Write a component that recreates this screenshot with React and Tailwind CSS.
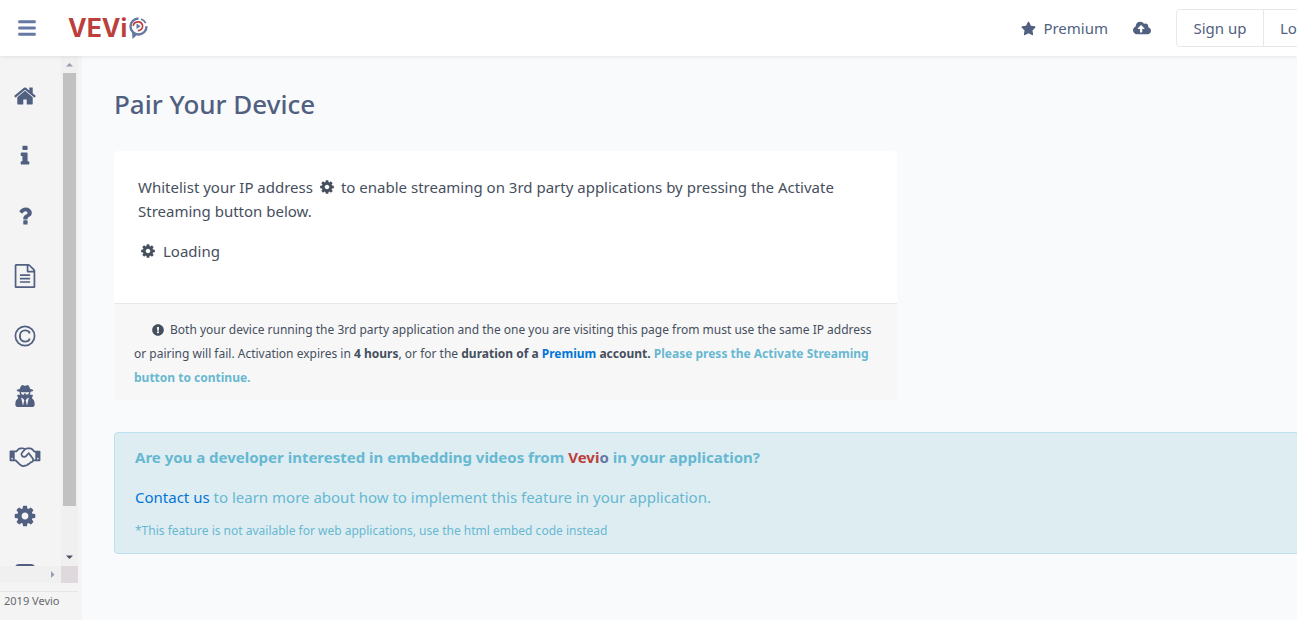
import {
  FaBars,
  FaCloudUploadAlt,
  FaExclamationCircle,
  FaStar,
  FaUserSecret,
} from 'react-icons/fa'

const PATHS = {
  home: 'M1472 992v480q0 26-19 45t-45 19h-384v-384h-256v384h-384q-26 0-45-19t-19-45v-480q0-1 .5-3t.5-3l575-474 575 474q1 2 1 6zm223-69l-62 74q-8 9-21 11h-3q-13 0-21-7l-692-577-692 577q-12 8-24 7-13-2-21-11l-62-74q-8-10-7-23.5t11-21.5l719-599q32-26 76-26t76 26l244 204v-195q0-14 9-23t23-9h192q14 0 23 9t9 23v408l219 182q10 8 11 21.5t-7 23.5z',
  info: 'M1216 1344v128q0 26-19 45t-45 19h-512q-26 0-45-19t-19-45v-128q0-26 19-45t45-19h64v-384h-64q-26 0-45-19t-19-45v-128q0-26 19-45t45-19h384q26 0 45 19t19 45v576h64q26 0 45 19t19 45zm-128-1152v192q0 26-19 45t-45 19h-256q-26 0-45-19t-19-45v-192q0-26 19-45t45-19h256q26 0 45 19t19 45z',
  question: 'M1088 1256v240q0 16-12 28t-28 12h-240q-16 0-28-12t-12-28v-240q0-16 12-28t28-12h240q16 0 28 12t12 28zm316-600q0 54-15.5 101t-35 76.5-55 59.5-57.5 43.5-61 35.5q-41 23-68.5 65t-27.5 67q0 17-12 32.5t-28 15.5h-240q-15 0-25.5-18.5t-10.5-37.5v-45q0-83 65-156.5t143-108.5q59-27 84-56t25-76q0-42-46.5-74t-107.5-32q-65 0-108 29-35 25-107 115-13 16-31 16-12 0-25-8l-164-125q-13-10-15.5-25t5.5-28q160-266 464-266 80 0 161 31t146 83 106 127.5 41 158.5z',
  file: 'M1596 380q28 28 48 76t20 88v1152q0 40-28 68t-68 28h-1344q-40 0-68-28t-28-68v-1600q0-40 28-68t68-28h896q40 0 88 20t76 48zm-444-244v376h376q-10-29-22-41l-313-313q-12-12-41-22zm384 1528v-1024h-416q-40 0-68-28t-28-68v-416h-768v1536h1280zm-1024-864q0-14 9-23t23-9h704q14 0 23 9t9 23v64q0 14-9 23t-23 9h-704q-14 0-23-9t-9-23v-64zm736 224q14 0 23 9t9 23v64q0 14-9 23t-23 9h-704q-14 0-23-9t-9-23v-64q0-14 9-23t23-9h704zm0 256q14 0 23 9t9 23v64q0 14-9 23t-23 9h-704q-14 0-23-9t-9-23v-64q0-14 9-23t23-9h704z',
  cog: 'M1152 896q0-106-75-181t-181-75-181 75-75 181 75 181 181 75 181-75 75-181zm512-109v222q0 12-8 23t-20 13l-185 28q-19 54-39 91 35 50 107 138 10 12 10 25t-9 23q-27 37-99 108t-94 71q-12 0-26-9l-138-108q-44 23-91 38-16 136-29 186-7 28-36 28h-222q-14 0-24.5-8.5t-11.5-21.5l-28-184q-49-16-90-37l-141 107q-10 9-25 9-14 0-25-11-126-114-165-168-7-10-7-23 0-12 8-23 15-21 51-66.5t54-70.5q-27-50-41-99l-183-27q-13-2-21-12.5t-8-23.5v-222q0-12 8-23t19-13l186-28q14-46 39-92-40-57-107-138-10-12-10-24 0-10 9-23 26-36 98.5-107.5t94.5-71.5q13 0 26 10l138 107q44-23 91-38 16-136 29-186 7-28 36-28h222q14 0 24.5 8.5t11.5 21.5l28 184q49 16 90 37l142-107q9-9 24-9 13 0 25 10 129 119 165 170 7 8 7 22 0 12-8 23-15 21-51 66.5t-54 70.5q26 50 41 98l183 28q13 2 21 12.5t8 23.5z',
  handshake: 'M192 1152q40 0 56-32t0-64-56-32-56 32 0 64 56 32zm1473-58q-10-13-38.5-50t-41.5-54-38-49-42.5-53-40.5-47-45-49l-125 140q-83 94-208.5 92t-205.5-98q-57-69-56.5-158t58.5-157l177-206q-22-11-51-16.5t-47.5-6-56.5.5-49 1q-92 0-158 66l-158 158h-155v544q5 0 21-.5t22 0 19.5 2 20.5 4.5 17.5 8.5 18.5 13.5l297 292q115 111 227 111 78 0 125-47 57 20 112.5-8t72.5-85q74 6 127-44 20-18 36-45.5t14-50.5q10 10 43 10 43 0 77-21t49.5-53 12-71.5-30.5-73.5zm159 58h96v-512h-93l-157-180q-66-76-169-76h-167q-89 0-146 67l-209 243q-28 33-28 75t27 75q43 51 110 52t111-49l193-218q25-23 53.5-21.5t47 27 8.5 56.5q16 19 56 63t60 68q29 36 82.5 105.500t64.5 84.500q52 66 60 140zm288 0q40 0 56-32t0-64-56-32-56 32 0 64 56 32zm192-576v640q0 26-19 45t-45 19h-434q-27 65-82 106.500t-125 51.500q-33 48-80.500 81.500t-102.500 45.500q-42 53-104.500 81.500t-128.500 24.500q-60 34-126 39.500t-127.500-14-117-53.500-103.500-81l-287-282h-358q-26 0-45-19t-19-45v-672q0-26 19-45t45-19h421q14-14 47-48t47.500-48 44-40 50.500-37.500 51-25.500 62-19.500 68-5.500h117q99 0 181 56 82-56 181-56h167q35 0 67 6t56.500 14.500 51.500 26.500 44.500 31 43 39.500 39 41 41 45.500 41.500 44h355q26 0 45 19t19 45z',
}

function Glyph({ name, viewBox = '0 0 1792 1792', className }) {
  return (
    <svg viewBox={viewBox} fill="currentColor" className={className} aria-hidden="true">
      <path d={PATHS[name]} />
    </svg>
  )
}

function Copyright() {
  return (
    <svg viewBox="0 0 24 24" fill="none" stroke="currentColor" className="size-6" aria-hidden="true">
      <circle cx="12" cy="12" r="9.6" strokeWidth="1.7" />
      <path d="M16.3 9.4V8.2C15.2 6.8 13.6 6.4 12.2 6.4C9 6.4 6.9 8.8 6.9 12C6.9 15.3 9.1 17.6 12.2 17.6C13.8 17.6 15.6 17 16.3 15.8V14.5" strokeWidth="1.9" />
    </svg>
  )
}

const NAV = [
  { label: 'Home', icon: <Glyph name="home" className="size-6" /> },
  { label: 'About', icon: <Glyph name="info" className="size-6" /> },
  { label: 'Help', icon: <Glyph name="question" className="size-6" /> },
  { label: 'Terms', icon: <Glyph name="file" className="size-6" /> },
  { label: 'Copyright', icon: <Copyright /> },
  { label: 'Privacy', icon: <FaUserSecret className="size-[22px]" /> },
  { label: 'Partners', icon: <Glyph name="handshake" viewBox="0 0 2304 1792" className="h-6 w-8" /> },
  { label: 'Settings', icon: <Glyph name="cog" className="size-6" /> },
]

function Logo() {
  return (
    <a href="#" aria-label="Vevio" className="ml-[31px] flex items-center gap-px text-[#bb403c]">
      <span className="font-[Inter] text-[25px] leading-7 font-bold">VEVi</span>
      <svg viewBox="0 0 20 22" className="h-[22px] w-5" fill="none" aria-hidden="true">
        <path d="M10.500 1.500A8 8 0 1 0 18.500 9.300" stroke="#6678a3" strokeWidth="2.4" />
        <path d="M13 1.900A8 8 0 0 1 17.700 6.200" stroke="#6678a3" strokeWidth="1.6" />
        <path d="M4 15.5L4.5 22L9.5 17.5Z" fill="#6678a3" />
        <path d="M5.2 9A4.8 4.8 0 0 1 14.6 8.5A4.6 4.6 0 0 1 9.8 13.6" stroke="#bb403c" strokeWidth="1.6" />
        <path d="M8.5 6.5L12.6 9.2L8.5 12Z" fill="#6678a3" />
      </svg>
    </a>
  )
}

function Header() {
  return (
    <header className="relative z-10 flex h-14 shrink-0 items-center bg-white pl-[17px] text-[#515f80] shadow-[0_1px_4px_rgba(0,0,0,0.08)]">
      <button type="button" aria-label="Menu" className="text-[#6678a3]">
        <FaBars className="size-5" />
      </button>
      <Logo />
      <nav className="-mr-[46px] ml-auto flex items-center">
        <a href="#" className="flex items-center gap-[7px]">
          <FaStar className="size-[15px]" />
          Premium
        </a>
        <a href="#" aria-label="Upload" className="mx-[25px]">
          <FaCloudUploadAlt className="size-[18px]" />
        </a>
        <div className="flex rounded-sm border border-[#e8e8ea] leading-9">
          <a href="#" className="w-[87px] border-r border-[#e8e8ea] text-center">Sign up</a>
          <a href="#" className="w-[78px] pl-4">Log in</a>
        </div>
      </nav>
    </header>
  )
}

function Sidebar() {
  return (
    <aside className="flex w-[82px] shrink-0 flex-col bg-[#f4f4f4]">
      <div className="flex min-h-0 flex-1">
        <nav className="flex min-w-0 flex-1 flex-col overflow-hidden pt-[10px] pr-[11px] text-[#515f80]">
          {NAV.map(item => (
            <a key={item.label} href="#" aria-label={item.label} className="flex h-[60px] shrink-0 items-center justify-center">
              {item.icon}
            </a>
          ))}
          <span className="mt-[18px] ml-[15px] h-3 w-5 shrink-0 rounded-sm bg-[#515f80]" />
        </nav>
        <div className="mr-1 flex w-[17px] flex-col items-center bg-[#f0f0f0]">
          <svg viewBox="0 0 17 17" className="size-[17px]" fill="#9a9caf"><path d="M5 10.500L8.500 7L12 10.500Z" /></svg>
          <span className="h-[433px] w-[13px] bg-[#c1c1c1]" />
          <svg viewBox="0 0 17 17" className="mt-auto size-[17px]" fill="#4a4e60"><path d="M5 6.500L8.500 10L12 6.500Z" /></svg>
        </div>
      </div>
      <div className="mr-1 flex h-[17px] bg-[#f0f0f0]">
        <svg viewBox="0 0 17 17" className="ml-auto size-[17px]" fill="#9a9caf"><path d="M7 5L10.500 8.500L7 12Z" /></svg>
        <span className="w-[17px] bg-[#dfd8dc]" />
      </div>
      <div className="mt-2 mr-1 h-[29px] border-t border-[#e6e6e8] pl-1 text-[11px] leading-[18px] text-[#666870]">
        2019 Vevio
      </div>
    </aside>
  )
}

export default function App() {
  return (
    <div className="flex h-screen flex-col overflow-hidden bg-[#f9fafc] font-['Noto_Sans','Open_Sans',sans-serif] text-[15px] leading-6 text-[#464f5e]">
      <Header />
      <div className="flex min-h-0 flex-1">
        <Sidebar />
        <main className="min-w-0 flex-1 pt-8 pl-8">
          <h1 className="text-[26px] leading-8 font-medium text-[#515f80]">Pair Your Device</h1>

          <section className="mt-[31px] max-w-[783px] rounded-sm bg-white">
            <div className="h-[152px] p-6">
              <p>
                Whitelist your IP address
                <Glyph name="cog" className="mx-[6px] inline size-4 align-[-2px]" />
                to enable streaming on 3rd party applications by pressing the Activate Streaming button below.
              </p>
              <p className="mt-4 flex items-center gap-[7px] pl-[2px]">
                <Glyph name="cog" className="size-4" />
                Loading
              </p>
            </div>
            <p className="border-t border-[#e8e8ea] bg-[#f7f7f7] px-5 pt-[14px] pb-[10px] text-[12px]">
              <FaExclamationCircle className="mr-[6px] ml-[18px] inline size-3 align-[-2px]" />
              Both your device running the 3rd party application and the one you are visiting this page from must use
              the same IP address or pairing will fail. Activation expires in <b>4 hours</b>, or for the{' '}
              <b>duration of a <a href="#" className="text-[#0275d8]">Premium</a> account.</b>{' '}
              <b className="text-[#67b8d1]">Please press the Activate Streaming button to continue.</b>
            </p>
          </section>

          <section className="mt-8 -mr-1 rounded-sm border border-[#bce0ee] bg-[#deedf2] px-5 pt-3 pb-[10px] text-[#67b8d1]">
            <p className="font-bold">
              Are you a developer interested in embedding videos from{' '}
              <span className="text-[#bb403c]">Vevi</span><span className="text-[#6678a3]">o</span> in your application?
            </p>
            <p className="mt-4">
              <a href="#" className="text-[#0275d8]">Contact us</a> to learn more about how to implement this feature in your application.
            </p>
            <p className="mt-[10px] text-[12px]">
              *This feature is not available for web applications, use the html embed code instead
            </p>
          </section>
        </main>
      </div>
    </div>
  )
}
